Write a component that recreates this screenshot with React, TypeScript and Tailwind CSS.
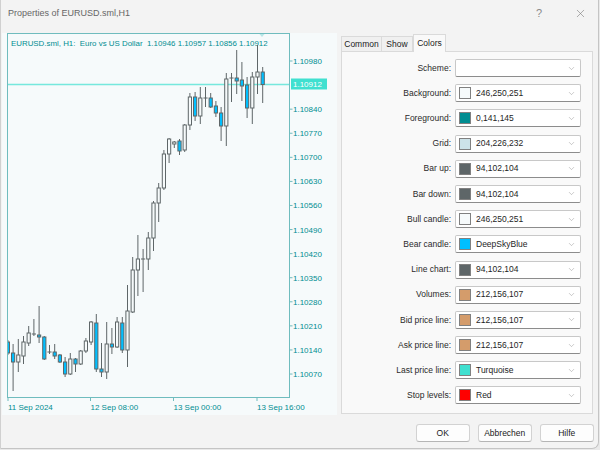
import React from 'react';
import { ChevronDown, X } from 'lucide-react';

type Candle = ['u' | 'd', number, number, number, number];

// type, body top, body bottom, wick top, wick bottom (page pixels)
const candles: Candle[] = [
  ['d', 342, 353, 340, 355],
  ['d', 353, 362, 344, 391],
  ['u', 355, 362, 339, 372],
  ['u', 342, 356, 336, 364],
  ['u', 333, 343, 326, 346],
  ['u', 334, 334, 319, 336],
  ['d', 335, 337, 306, 343],
  ['d', 337, 359, 336, 360],
  ['u', 352, 352, 345, 354],
  ['d', 352, 356, 344, 359],
  ['d', 355, 362, 354, 363],
  ['d', 362, 374, 357, 377],
  ['u', 359, 374, 353, 375],
  ['d', 359, 364, 358, 372],
  ['u', 351, 364, 350, 365],
  ['u', 341, 351, 338, 353],
  ['u', 322, 342, 321, 345],
  ['d', 323, 369, 314, 372],
  ['d', 369, 372, 343, 377],
  ['u', 344, 372, 322, 379],
  ['d', 344, 347, 328, 354],
  ['u', 322, 347, 317, 348],
  ['d', 323, 350, 317, 353],
  ['u', 311, 350, 285, 367],
  ['u', 270, 312, 257, 313],
  ['u', 259, 270, 235, 296],
  ['u', 259, 259, 249, 292],
  ['u', 238, 259, 232, 270],
  ['u', 203, 238, 201, 251],
  ['u', 188, 203, 183, 222],
  ['u', 154, 188, 150, 190],
  ['u', 139, 154, 138, 163],
  ['u', 142, 144, 141, 148],
  ['d', 141, 151, 139, 155],
  ['u', 125, 150, 124, 152],
  ['u', 97, 125, 93, 130],
  ['d', 97, 116, 92, 121],
  ['u', 98, 116, 87, 124],
  ['u', 98, 98, 87, 107],
  ['d', 98, 107, 93, 108],
  ['d', 106, 113, 101, 117],
  ['d', 113, 126, 107, 141],
  ['u', 79, 126, 73, 146],
  ['u', 78, 78, 73, 102],
  ['d', 78, 81, 50, 94],
  ['d', 80, 86, 62, 101],
  ['d', 85, 108, 77, 118],
  ['u', 77, 108, 72, 124],
  ['u', 72, 77, 45, 94],
  ['d', 72, 84.5, 67, 103],
];

const prices = ['1.10980', '1.10840', '1.10770', '1.10700', '1.10630', '1.10560', '1.10490', '1.10420', '1.10350', '1.10280', '1.10210', '1.10140', '1.10070'];
const priceSteps = [0, 2, 3, 4, 5, 6, 7, 8, 9, 10, 11, 12, 13];

const times = [
  { x: 8, label: '11 Sep 2024' },
  { x: 90.5, label: '12 Sep 08:00' },
  { x: 173.5, label: '13 Sep 00:00' },
  { x: 257, label: '13 Sep 16:00' },
];

const rows: { label: string; color?: string; value?: string }[] = [
  { label: 'Scheme:' },
  { label: 'Background:', color: '#f6fafb', value: '246,250,251' },
  { label: 'Foreground:', color: '#008d91', value: '0,141,145' },
  { label: 'Grid:', color: '#cce2e8', value: '204,226,232' },
  { label: 'Bar up:', color: '#5e6668', value: '94,102,104' },
  { label: 'Bar down:', color: '#5e6668', value: '94,102,104' },
  { label: 'Bull candle:', color: '#f6fafb', value: '246,250,251' },
  { label: 'Bear candle:', color: '#00bfff', value: 'DeepSkyBlue' },
  { label: 'Line chart:', color: '#5e6668', value: '94,102,104' },
  { label: 'Volumes:', color: '#d49c6b', value: '212,156,107' },
  { label: 'Bid price line:', color: '#d49c6b', value: '212,156,107' },
  { label: 'Ask price line:', color: '#d49c6b', value: '212,156,107' },
  { label: 'Last price line:', color: '#40e0d0', value: 'Turquoise' },
  { label: 'Stop levels:', color: '#ff0000', value: 'Red' },
];

const Chart = () => {
  const axis = '#6fbcbe';
  const teal = '#008d91';
  return (
    <svg width={335} height={382} viewBox="2 33 335 382" className="block">
      <defs>
        <clipPath id="plot">
          <rect x={8} y={34} width={281} height={363} />
        </clipPath>
      </defs>
      <rect x={2} y={33} width={335} height={382} fill="#f6fafb" />
      <text x={11} y={46} fontSize={7.9} fill={teal} fontFamily="'Liberation Sans', Arial, sans-serif" xmlSpace="preserve">
        {'EURUSD.sml, H1:  Euro vs US Dollar  1.10946 1.10957 1.10856 1.10912'}
      </text>
      <g clipPath="url(#plot)">
        <line x1={7} y1={84.5} x2={289} y2={84.5} stroke="#40e0d0" strokeOpacity={0.7} strokeWidth={1.5} />
        {candles.map(([t, bt, bb, wt, wb], i) => {
          const cx = 7.9 + i * 5.2;
          return (
            <g key={i}>
              <line x1={cx} y1={wt} x2={cx} y2={wb} stroke="#5e6668" strokeWidth={1} />
              <rect
                x={cx - 1.6}
                y={bt}
                width={3.2}
                height={Math.max(bb - bt, 0.01)}
                fill={t === 'd' ? '#00bfff' : '#f6fafb'}
                stroke="#5e6668"
                strokeWidth={1}
              />
            </g>
          );
        })}
      </g>
      <polygon points="259,33.5 265,33.5 262,37" fill="#b8e6e6" />
      <line x1={7.5} y1={33.5} x2={289.5} y2={33.5} stroke={axis} />
      <line x1={7.5} y1={33} x2={7.5} y2={398} stroke={axis} />
      <line x1={7} y1={397.5} x2={290} y2={397.5} stroke={axis} />
      <line x1={289.5} y1={33} x2={289.5} y2={398} stroke={axis} />
      {prices.map((p, k) => {
        const y = 61 + priceSteps[k] * 24.08;
        return (
          <g key={p}>
            <line x1={289} y1={y} x2={292.5} y2={y} stroke={axis} />
            <text x={293} y={y + 3} fontSize={8} fill={teal} fontFamily="'Liberation Sans', Arial, sans-serif">
              {p}
            </text>
          </g>
        );
      })}
      <rect x={291} y={78.5} width={36} height={11} fill="#40e0d0" />
      <text x={293} y={87} fontSize={8} fill="#ffffff" fontFamily="'Liberation Sans', Arial, sans-serif">
        1.10912
      </text>
      {times.map((t) => (
        <g key={t.label}>
          <line x1={t.x} y1={397} x2={t.x} y2={401} stroke={axis} />
          <text x={t.x} y={409.5} fontSize={8} fill={teal} fontFamily="'Liberation Sans', Arial, sans-serif">
            {t.label}
          </text>
        </g>
      ))}
    </svg>
  );
};

export default function App() {
  return (
    <div className="w-[600px] h-[450px] bg-[#e9e9e9] font-['Liberation_Sans',Arial,sans-serif]">
      <div className="w-[599px] h-[449px] bg-[#f3f3f3] border-r border-b border-[#c4c4c4] rounded-br-[7px] border-l border-l-[#d0d0d0]">
        {/* Title bar */}
        <div className="h-[32px] flex items-center pl-[7px] text-[9px] text-[#666]">
          <span className="-mt-[5px]">Properties of EURUSD.sml,H1</span>
          <span className="ml-auto -mt-[5px] text-[11px] text-[#8a8a8a]">?</span>
          <X size={13} strokeWidth={1.1} className="ml-[32px] mr-[11px] -mt-[5px] text-[#7a7a7a]" />
        </div>

        <div className="flex h-[382px] mt-px">
          <div className="ml-[1px] w-[335px] h-[382px]">
            <Chart />
          </div>

          <div className="ml-[4px] w-[252px] flex flex-col">
            {/* Tabs */}
            <div className="flex items-end h-[18px] text-[8.5px] text-[#222]">
              <div className="w-[41px] h-[15px] border border-b-0 border-[#dadada] bg-[#f0f0f0] flex items-center justify-center">Common</div>
              <div className="w-[31px] h-[15px] border border-b-0 border-l-0 border-[#dadada] bg-[#f0f0f0] flex items-center justify-center">Show</div>
              <div className="w-[33px] h-[18px] border border-b-0 border-[#dadada] bg-[#f9f9f9] flex items-center justify-center relative z-10 -mb-px -mt-px">Colors</div>
            </div>
            {/* Panel */}
            <div className="h-[363px] border border-[#dadada] bg-[#f9f9f9] pt-[7px] flex flex-col gap-[7.2px]">
              {rows.map((r) => (
                <div key={r.label} className="flex items-center h-[18px]">
                  <div className="w-[109px] text-right text-[8.5px] text-[#2a2a2a]">{r.label}</div>
                  <div className="ml-[4px] w-[126px] h-[18px] bg-white border border-[#c8c8c8] border-b-[#8c8c8c] rounded-[2px] flex items-center pl-[3px]">
                    {r.color && (
                      <div className="w-[12px] h-[12px] border border-[#808080]" style={{ backgroundColor: r.color }} />
                    )}
                    {r.value && <span className="ml-[5px] text-[8.5px] text-[#1e1e1e]">{r.value}</span>}
                    <ChevronDown size={9} strokeWidth={1.2} className="ml-auto mr-[4px] text-[#8a8a8a]" />
                  </div>
                </div>
              ))}
            </div>
          </div>
        </div>

        {/* Buttons */}
        <div className="flex justify-end gap-[7.5px] pr-[4px] mt-[9px] text-[8.5px] text-[#1a1a1a]">
          {['OK', 'Abbrechen', 'Hilfe'].map((b) => (
            <div key={b} className="w-[54.5px] h-[18px] bg-[#fdfdfd] border border-[#d2d2d2] border-b-[#b5b5b5] rounded-[3px] flex items-center justify-center">
              {b}
            </div>
          ))}
        </div>
      </div>
    </div>
  );
}
